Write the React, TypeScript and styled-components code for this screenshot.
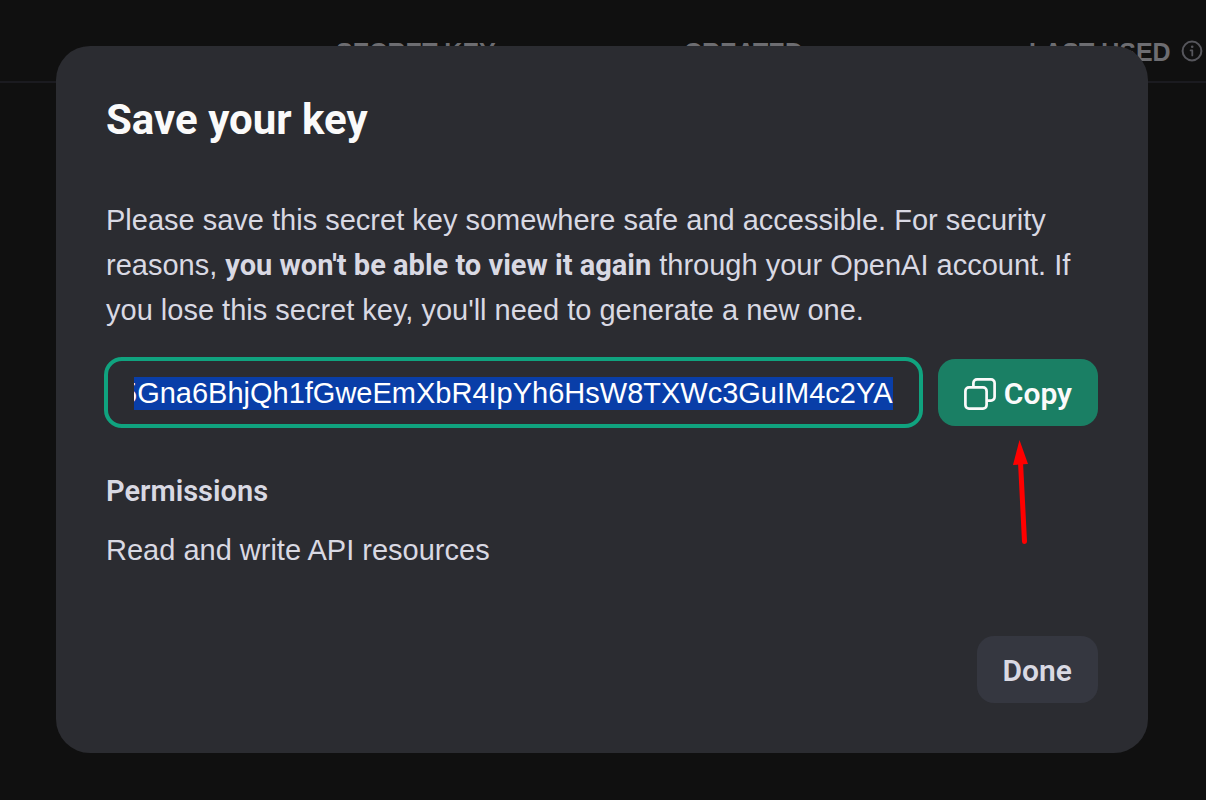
import React, { useEffect, useRef } from "react";
import styled, { createGlobalStyle } from "styled-components";

const emphasisFont = `Roboto, Inter, sans-serif`;

const GlobalStyle = createGlobalStyle`
  *, *::before, *::after { box-sizing: border-box; }
  html { background: #101010; }
  body {
    margin: 0;
    font-family: "Liberation Sans", Arial, sans-serif;
    font-size: 29px;
    color: #d9d9e3;
  }
`;

const Page = styled.main`
  min-height: 100vh;
  overflow: hidden;
  background: #101010;
`;

const KeysTable = styled.table`
  width: 100%;
  table-layout: fixed;
  border-collapse: collapse;
`;

const HeadCell = styled.th<{ $width?: string }>`
  width: ${({ $width }) => $width ?? "auto"};
  height: 82px;
  padding: 22px 0 0;
  border-bottom: 2px solid #1b1b20;
  text-align: left;
  white-space: nowrap;
  text-transform: uppercase;
  font-size: 25px;
  font-weight: 700;
  line-height: 36px;
  color: #6d6d71;
`;

const HeadContent = styled.span`
  display: flex;
  align-items: center;
  gap: 10px;
`;

const Overlay = styled.div`
  position: fixed;
  inset: 0;
  display: flex;
  align-items: center;
  justify-content: center;
  padding: 0 58px 1px 56px;
`;

const Dialog = styled.section`
  display: flex;
  flex-direction: column;
  width: 100%;
  max-width: 1200px;
  padding: 50px;
  border-radius: 34px;
  background: #2b2c31;
`;

const Title = styled.h2`
  margin: 0 0 54px;
  font-family: ${emphasisFont};
  font-size: 42px;
  font-weight: 700;
  line-height: 48px;
  color: #fafafa;
`;

const Text = styled.p`
  margin: 0;
  line-height: 45px;
`;

const Strong = styled.strong`
  font-family: ${emphasisFont};
  font-weight: 700;
`;

const KeyRow = styled.div`
  display: flex;
  align-items: center;
  gap: 15px;
  margin: 24px 0 41px -2px;
`;

const KeyInput = styled.input`
  flex: 1;
  min-width: 0;
  height: 71px;
  padding: 2px 26px 0;
  border: 4px solid #10a37f;
  border-radius: 18px;
  outline: none;
  background: transparent;
  color: #fff;
  font: inherit;

  &::selection {
    background: #093ea8;
    color: #fff;
  }
`;

const Button = styled.button<{ $primary?: boolean }>`
  display: inline-flex;
  align-items: center;
  justify-content: center;
  gap: 8px;
  height: 67px;
  padding: 2px 26px 0;
  border: 0;
  border-radius: 17px;
  background: ${({ $primary }) => ($primary ? "#1a7f64" : "#353740")};
  color: ${({ $primary }) => ($primary ? "#fafafa" : "#d9d9e3")};
  font-family: ${emphasisFont};
  font-size: 30px;
  font-weight: 600;
`;

const Subheading = styled.h3`
  margin: 0 0 14px;
  font-family: ${emphasisFont};
  font-size: 29px;
  font-weight: 600;
  line-height: 45px;
`;

const Footer = styled.footer`
  display: flex;
  justify-content: flex-end;
  margin-top: 63px;
`;

const Arrow = styled.svg`
  position: absolute;
  top: 100%;
  left: 50%;
  margin: 14px 0 0 -5px;
`;

const CopyWrap = styled.div`
  position: relative;
  display: flex;
`;

function InfoIcon() {
  return (
    <svg width="22" height="24" viewBox="0 0 22 24" fill="none" stroke="#56565c" strokeWidth="2" aria-hidden="true">
      <circle cx="11" cy="11" r="9.4" />
      <path d="M9.6 10.4H11.3V15.4" strokeWidth="1.8" strokeLinejoin="round" strokeLinecap="round" />
      <circle cx="11.2" cy="6.8" r="1.3" fill="#56565c" stroke="none" />
    </svg>
  );
}

function CopyIcon() {
  return (
    <svg width="32" height="32" viewBox="0 0 32 32" fill="none" stroke="currentColor" strokeWidth="2.7" aria-hidden="true">
      <rect x="1.4" y="9.4" width="21.2" height="21.2" rx="3.6" />
      <path d="M9.4 9.4V5a3.6 3.6 0 0 1 3.6-3.6h14A3.6 3.6 0 0 1 30.6 5v14a3.6 3.6 0 0 1-3.6 3.6h-4.4" />
    </svg>
  );
}

export default function App() {
  const keyRef = useRef<HTMLInputElement>(null);

  useEffect(() => {
    const input = keyRef.current;
    if (!input) return;
    input.focus();
    input.select();
    input.scrollLeft = input.scrollWidth;
  }, []);

  return (
    <>
      <GlobalStyle />
      <Page>
        <KeysTable>
          <thead>
            <tr>
              <HeadCell $width="336px" as="td" />
              <HeadCell $width="348px" scope="col">Secret key</HeadCell>
              <HeadCell $width="345px" scope="col">Created</HeadCell>
              <HeadCell scope="col">
                <HeadContent>
                  Last used <InfoIcon />
                </HeadContent>
              </HeadCell>
            </tr>
          </thead>
        </KeysTable>
      </Page>
      <Overlay>
        <Dialog role="dialog" aria-modal="true" aria-labelledby="save-key-title">
          <Title id="save-key-title">Save your key</Title>
          <Text>
            Please save this secret key somewhere safe and accessible. For security reasons,{" "}
            <Strong>you won't be able to view it again</Strong> through your OpenAI account. If you lose this
            secret key, you'll need to generate a new one.
          </Text>
          <KeyRow>
            <KeyInput
              ref={keyRef}
              readOnly
              aria-label="Secret key"
              value="5Gna6BhjQh1fGweEmXbR4IpYh6HsW8TXWc3GuIM4c2YA"
            />
            <CopyWrap>
              <Button type="button" $primary>
                <CopyIcon />
                Copy
              </Button>
              <Arrow width="16" height="105" viewBox="0 0 16 105" aria-hidden="true">
                <path d="M7.5 22L11.5 101.5" stroke="#f00" strokeWidth="5" strokeLinecap="round" />
                <path d="M6.5 0L15 24L0 25Z" fill="#f00" />
              </Arrow>
            </CopyWrap>
          </KeyRow>
          <Subheading>Permissions</Subheading>
          <Text>Read and write API resources</Text>
          <Footer>
            <Button type="button">Done</Button>
          </Footer>
        </Dialog>
      </Overlay>
    </>
  );
}
